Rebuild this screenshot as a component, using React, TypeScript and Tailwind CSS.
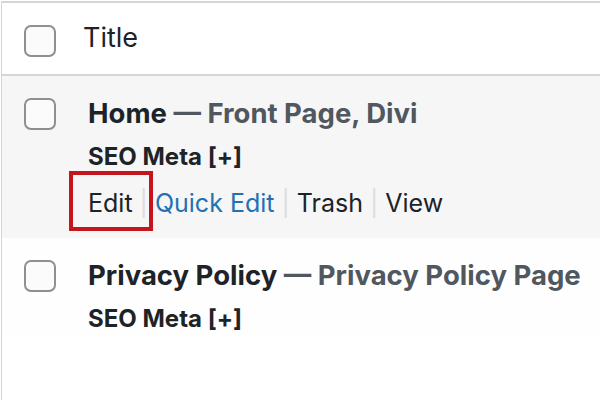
import React from "react";

function Checkbox() {
  return <div className="h-[32px] w-[32px] rounded-[7px] border-2 border-[#8c8f94] bg-[#fbfbfb]" />;
}

function Sep() {
  return <span className="mx-[7px] text-[#dcdcde]">|</span>;
}

export default function App() {
  return (
    <div
      className="h-[400px] w-[600px] overflow-hidden bg-white text-[#1d2327]"
      style={{ fontFamily: "Inter, 'Noto Sans', sans-serif" }}
    >
      <div className="ml-px mt-px h-full border-l border-t-2 border-[#d5d5d7]">
        {/* header */}
        <div className="flex h-[73px] items-center border-b-2 border-[#d5d5d7] bg-white">
          <div className="w-[81px] pl-[22px] pt-[4px]">
            <Checkbox />
          </div>
          <span className="text-[27px] text-[#1d2327]">Title</span>
        </div>

        {/* row 1 */}
        <div className="flex h-[162px] bg-[#f6f6f7]">
          <div className="w-[86px] pl-[22px] pt-[22px]">
            <Checkbox />
          </div>
          <div className="pt-[18px]">
            <div className="text-[27.5px] font-bold leading-[38px]">
              Home <span className="text-[#50575e]">— Front Page, Divi</span>
            </div>
            <div className="mt-[10px] text-[24px] font-bold leading-[30px]">SEO Meta [+]</div>
            <div className="mt-[13px] flex text-[25px] leading-[36px]">
              <span className="relative">
                Edit
                <span className="absolute left-[-19px] top-[-14px] h-[60px] w-[84px] border-[4px] border-[#c4161c]" />
              </span>
              <Sep />
              <span className="text-[#2271b1]">Quick Edit</span>
              <Sep />
              <span>Trash</span>
              <Sep />
              <span>View</span>
            </div>
          </div>
        </div>

        {/* row 2 */}
        <div className="flex bg-[#fefefe]">
          <div className="w-[86px] pl-[22px] pt-[22px]">
            <Checkbox />
          </div>
          <div className="pt-[18px]">
            <div className="text-[27.5px] font-bold leading-[38px]">
              Privacy Policy <span className="text-[#50575e]">— Privacy Policy Page</span>
            </div>
            <div className="mt-[10px] text-[24px] font-bold leading-[30px]">SEO Meta [+]</div>
          </div>
        </div>
      </div>
    </div>
  );
}
